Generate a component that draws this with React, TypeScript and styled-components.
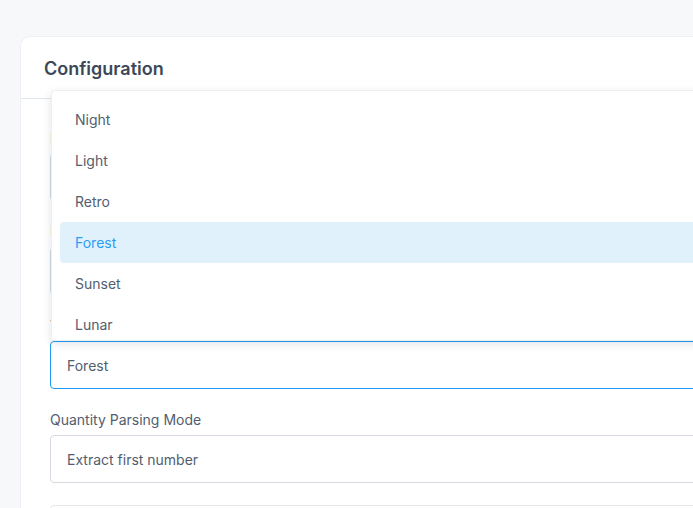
import React from 'react';
import styled, { createGlobalStyle } from 'styled-components';

interface Field {
  label: string;
  value: string;
  focused?: boolean;
}

const fields: Field[] = [
  { label: 'Default Currency', value: 'USD' },
  { label: 'Language', value: 'English' },
  { label: 'Theme', value: 'Forest', focused: true },
  { label: 'Quantity Parsing Mode', value: 'Extract first number' },
];

const themes = ['Night', 'Light', 'Retro', 'Forest', 'Sunset', 'Lunar', 'Ocean'];

const App: React.FC = () => {
  return (
    <>
      <GlobalStyle />
      <Page>
        <Card>
          <CardHeader>
            <Title>Configuration</Title>
          </CardHeader>
          <CardBody>
            {fields.map((f) => (
              <FieldGroup key={f.label}>
                <Label>{f.label}</Label>
                <SelectBox $focused={f.focused}>{f.value}</SelectBox>
              </FieldGroup>
            ))}
            <ExtraBox />
          </CardBody>
          <Dropdown>
            {themes.map((t) => (
              <Option key={t} $active={t === 'Forest'}>
                {t}
              </Option>
            ))}
          </Dropdown>
        </Card>
      </Page>
    </>
  );
};

export default App;

const GlobalStyle = createGlobalStyle`
  html, body {
    margin: 0;
    padding: 0;
    background: #f7f8fa;
    font-family: Inter, "Liberation Sans", sans-serif;
    overflow: hidden;
  }
`;

const Page = styled.div`
  height: 508px;
  padding: 36px 0 0 20px;
  box-sizing: border-box;
  overflow: hidden;
`;

const Card = styled.div`
  position: relative;
  width: 760px;
  background: #ffffff;
  border-radius: 10px;
  border: 1px solid #eef0f3;
  border-right: none;
  box-sizing: border-box;
`;

const CardHeader = styled.div`
  height: 62px;
  padding: 2px 23px 0;
  box-sizing: border-box;
  display: flex;
  align-items: center;
  border-bottom: 1px solid #dfe5ec;
`;

const Title = styled.h2`
  margin: 0;
  font-size: 18px;
  font-weight: 600;
  color: #3c4858;
`;

const CardBody = styled.div`
  padding: 30px 29px 0 29px;
  display: flex;
  flex-direction: column;
  gap: 22px;
`;

const FieldGroup = styled.div`
  display: flex;
  flex-direction: column;
  gap: 6px;
`;

const Label = styled.div`
  font-size: 14px;
  line-height: 18px;
  color: #525e6e;
`;

const SelectBox = styled.div<{ $focused?: boolean }>`
  height: 48px;
  box-sizing: border-box;
  border: 1px solid ${(p) => (p.$focused ? '#1d9bf6' : '#d5dae1')};
  border-radius: 4px;
  padding: 0 16px;
  display: flex;
  align-items: center;
  font-size: 14px;
  color: #525e6e;
  background: #ffffff;
`;

const ExtraBox = styled.div`
  height: 48px;
  border: 1px solid #e3e7ec;
  border-radius: 4px;
`;

const Dropdown = styled.div`
  position: absolute;
  top: 53px;
  left: 30px;
  right: 0;
  height: 251px;
  overflow: hidden;
  box-sizing: border-box;
  padding: 8px 0 0 8px;
  background: #ffffff;
  border: 1px solid #eceff3;
  border-radius: 4px;
  box-shadow: 0 3px 8px rgba(40, 60, 90, 0.14);
`;

const Option = styled.div<{ $active?: boolean }>`
  height: 41px;
  display: flex;
  align-items: center;
  padding: 0 15px;
  border-radius: 4px;
  font-size: 14px;
  color: ${(p) => (p.$active ? '#2a9df4' : '#525e6e')};
  background: ${(p) => (p.$active ? '#e1f1fc' : 'transparent')};
`;
